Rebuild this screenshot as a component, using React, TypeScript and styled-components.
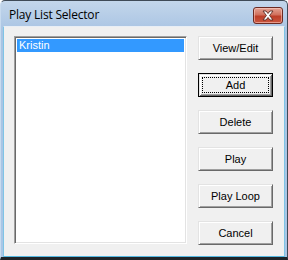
import React from "react";
import styled, { createGlobalStyle } from "styled-components";

const GlobalStyle = createGlobalStyle`
	html, body {
		margin: 0;
		padding: 0;
		background: #ffffff;
	}
	body {
		font-family: "Liberation Sans", Arial, sans-serif;
	}
`;

const buttons = ["View/Edit", "Add", "Delete", "Play", "Play Loop", "Cancel"];

function CloseIcon() {
	return (
		<svg width="14" height="11" viewBox="0 0 14 11">
			<path
				d="M2 1 L5 1 L7 3.5 L9 1 L12 1 L8.6 5.5 L12 10 L9 10 L7 7.5 L5 10 L2 10 L5.4 5.5 Z"
				fill="#ffffff"
				stroke="#5a2a22"
				strokeWidth="0.9"
				strokeLinejoin="round"
			/>
		</svg>
	);
}

function App() {
	return (
		<>
			<GlobalStyle />
			<Window>
				<TitleBar>
					<Title>Play List Selector</Title>
					<CloseButton>
						<CloseIcon />
					</CloseButton>
				</TitleBar>
				<Client>
					<ListBox>
						<ListItem selected>Kristin</ListItem>
					</ListBox>
					<ButtonColumn>
						{buttons.map((label) => (
							<PushButton key={label} isDefault={label === "Add"}>
								{label === "Add" ? <FocusRect>{label}</FocusRect> : label}
							</PushButton>
						))}
					</ButtonColumn>
				</Client>
			</Window>
		</>
	);
}

const Window = styled.div`
	width: 288px;
	height: 260px;
	box-sizing: border-box;
	display: flex;
	flex-direction: column;
	background: linear-gradient(#c3d6eb, #a9c4e3 30px, #a9c6e6);
	border: 1px solid #3f4a57;
	border-left-color: #c8dbef;
	border-bottom: 3px solid #1e2328;
	border-radius: 5px 5px 0 0;
	padding: 0 2px 0 2px;
`;

const TitleBar = styled.div`
	height: 25px;
	flex-shrink: 0;
	display: flex;
	align-items: center;
	justify-content: space-between;
	padding-left: 6px;
	padding-right: 2px;
`;

const Title = styled.span`
	font-family: "Open Sans", "Liberation Sans", sans-serif;
	font-size: 12px;
	color: #000000;
	letter-spacing: -0.2px;
	margin-top: 2px;
`;

const CloseButton = styled.div`
	width: 30px;
	height: 17px;
	box-sizing: border-box;
	margin-top: 4px;
	display: flex;
	align-items: center;
	justify-content: center;
	border: 1px solid #6b2a22;
	border-radius: 3px;
	background: linear-gradient(#e3a394, #d1705c 45%, #bd3e28 55%, #c9563f);
	box-shadow: inset 0 0 0 1px rgba(255, 210, 200, 0.55);
`;

const Client = styled.div`
	flex: 1;
	display: flex;
	gap: 11px;
	padding: 9px 10px 11px 10px;
	background: #f0f0f0;
	border-top: 1px solid #e8eef5;
	border-bottom: 1px solid #54b7e0;
	border-left: 1px solid #7fc4e6;
	border-right: 1px solid #7fc4e6;
`;

const ListBox = styled.div`
	width: 173px;
	height: 208px;
	box-sizing: border-box;
	background: #ffffff;
	border: 1px solid;
	border-color: #a0a0a0 #ffffff #ffffff #a0a0a0;
	box-shadow: inset 1px 1px #696969, inset -1px -1px #e3e3e3;
	padding: 2px;
`;

const ListItem = styled.div<{ selected?: boolean }>`
	height: 13px;
	line-height: 13px;
	padding-left: 2px;
	font-size: 11px;
	color: ${(props) => (props.selected ? "#ffffff" : "#000000")};
	background: ${(props) => (props.selected ? "#3399ff" : "transparent")};
`;

const ButtonColumn = styled.div`
	display: flex;
	flex-direction: column;
	gap: 13px;
`;

const PushButton = styled.div<{ isDefault?: boolean }>`
	width: 75px;
	height: 24px;
	box-sizing: border-box;
	display: flex;
	align-items: center;
	justify-content: center;
	font-size: 11px;
	color: #000000;
	background: #f0f0f0;
	border: 1px solid;
	border-color: ${(props) =>
		props.isDefault ? "#000000" : "#e3e3e3 #696969 #696969 #e3e3e3"};
	box-shadow: ${(props) =>
		props.isDefault
			? "inset 1px 1px #e3e3e3, inset -1px -1px #696969, inset 2px 2px #ffffff, inset -2px -2px #a0a0a0"
			: "inset 1px 1px #ffffff, inset -1px -1px #a0a0a0"};
	padding: ${(props) => (props.isDefault ? "3px" : "0")};
`;

const FocusRect = styled.div`
	flex: 1;
	align-self: stretch;
	display: flex;
	align-items: center;
	justify-content: center;
	border: 1px dotted #000000;
`;

export default App;
